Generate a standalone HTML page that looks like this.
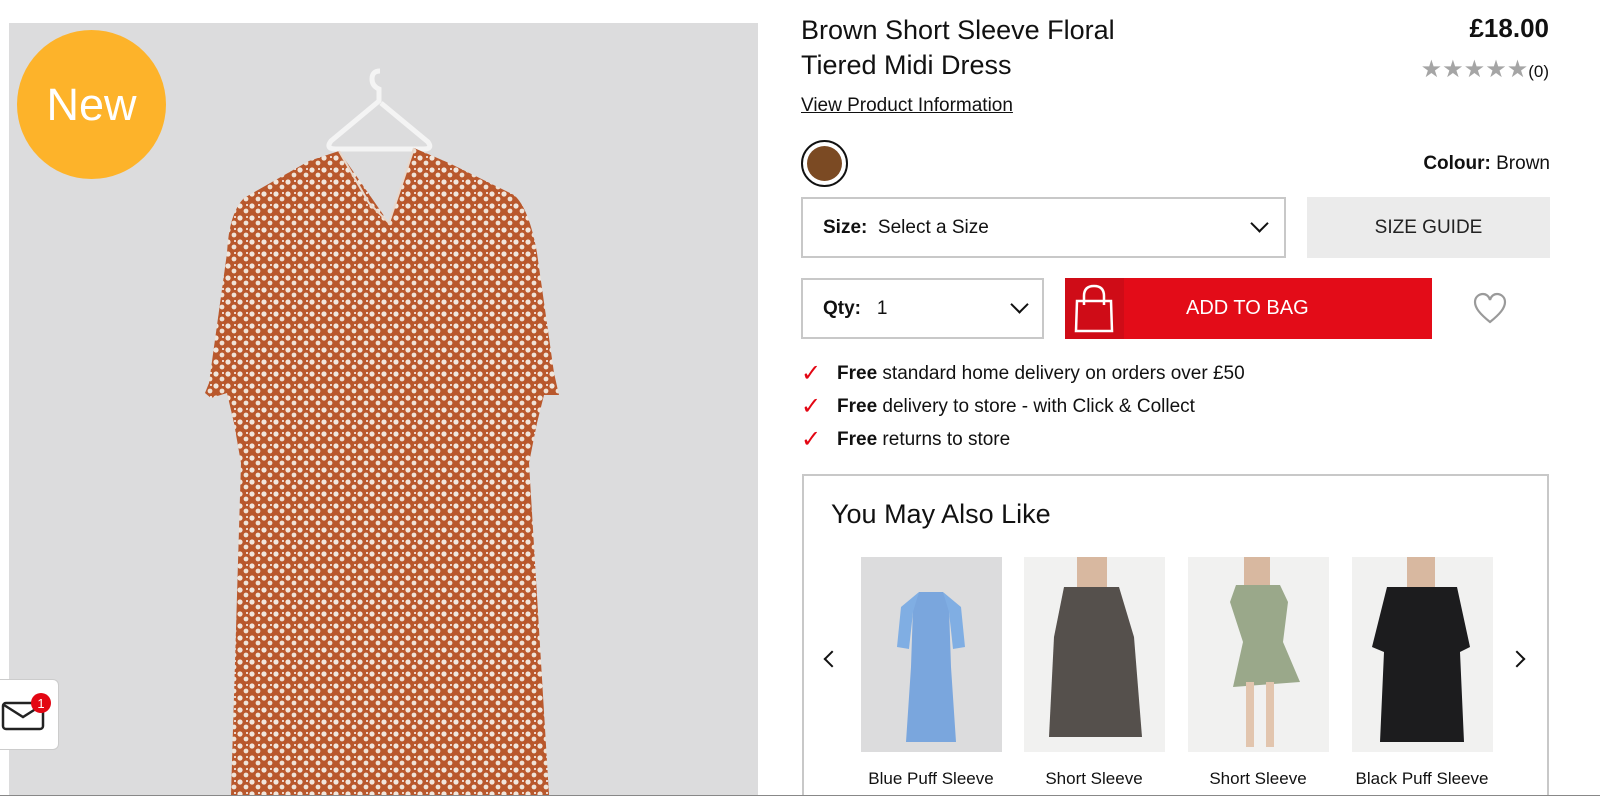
<!DOCTYPE html>
<html><head><meta charset="utf-8"><style>
*{margin:0;padding:0;box-sizing:border-box}
body{width:1600px;height:812px;overflow:hidden;background:#fff;font-family:"Liberation Sans",Arial,sans-serif;color:#111;position:relative}
.abs{position:absolute}
.img{left:9px;top:23px;width:749px;height:772px;background:#dcdcdd;overflow:hidden}
.new{left:17px;top:30px;width:149px;height:149px;border-radius:50%;background:#fdb32a;color:#fff;font-size:45px;text-align:center;line-height:149px}
.title{left:801px;top:13px;font-size:27px;line-height:35px}
.price{right:51px;top:13px;font-size:26px;font-weight:bold}
.stars{right:51px;top:55px;font-size:24px;color:#a5a5a5;letter-spacing:0}
.stars span{color:#111;font-size:17px;letter-spacing:0}
.vpi{left:801px;top:95px;font-size:19px;text-decoration:underline}
.sel{border:2px solid #c8c8c8;background:#fff;font-size:19px}
.chev{position:absolute;width:13px;height:13px;border-right:2.5px solid #111;border-bottom:2.5px solid #111;transform:rotate(45deg)}
.ticks div{height:33px;font-size:19px;position:relative;padding-left:36px}
.ticks div:before{content:"✓";position:absolute;left:0;top:-4px;color:#e30613;font-size:24px}
.box{left:802px;top:474px;width:747px;height:330px;border:2px solid #c8c8c8;border-bottom:none}
.th{position:absolute;top:557px;width:141px;height:195px}
.lab{position:absolute;top:769px;font-size:17px;width:170px;text-align:center}
</style></head><body>
<div class="abs img">
<svg width="749" height="772" viewBox="0 0 749 772">
<defs><pattern id="p" width="12" height="12" patternUnits="userSpaceOnUse"><rect width="12" height="12" fill="#b9582c"/><circle cx="3" cy="3" r="2.6" fill="#f1e6dc"/><circle cx="9" cy="8" r="2.4" fill="#efe2d6"/><circle cx="10" cy="2" r="1" fill="#fff"/></pattern></defs>
<path d="M371 48 q-8 0-8 8 q0 7 7 10 v12 L322 118 q-6 8 5 8 L415 126 q9 0 4-7 L372 80" fill="none" stroke="#f4f4f4" stroke-width="5"/>
<path d="M330 128 L300 138 L235 175 Q220 190 218 230 L200 360 L196 370 L202 375 L218 370 L225 400 L232 440 L222 772 L540 772 L520 440 L528 400 L535 372 L550 372 L545 350 L528 230 Q520 185 505 172 L440 140 L405 125 L380 200 Z" fill="url(#p)"/>
<path d="M330 128 L360 180 L380 200 L405 125" fill="none" stroke="#e8d8cc" stroke-width="2"/>
</svg></div>
<div class="abs new">New</div>
<div class="abs" style="left:0;top:679px;width:59px;height:71px;background:#fff;border:1px solid #ccc;border-left:none;border-radius:0 6px 6px 0">
<svg width="59" height="71"><rect x="3" y="23" width="40" height="26" rx="3" fill="none" stroke="#222" stroke-width="2.5"/><path d="M4 25 L23 37 L42 25" fill="none" stroke="#222" stroke-width="2.5"/><circle cx="41" cy="23" r="10" fill="#e30613"/><text x="41" y="28" font-size="13" fill="#fff" text-anchor="middle" font-family="Liberation Sans">1</text></svg></div>

<div class="abs title">Brown Short Sleeve Floral<br>Tiered Midi Dress</div>
<div class="abs price">£18.00</div>
<div class="abs stars">★★★★★<span>(0)</span></div>
<div class="abs vpi">View Product Information</div>
<div class="abs" style="left:801px;top:140px;width:47px;height:47px;border-radius:50%;border:2px solid #111;padding:4px"><div style="width:100%;height:100%;border-radius:50%;background:#7b4a23"></div></div>
<div class="abs" style="right:50px;top:153px;font-size:19px"><b>Colour:</b> Brown</div>
<div class="abs sel" style="left:801px;top:197px;width:485px;height:61px"><div class="abs" style="left:20px;top:18px"><b>Size:</b>&nbsp; Select a Size</div><div class="chev" style="right:18px;top:18px"></div></div>
<div class="abs" style="left:1307px;top:197px;width:243px;height:61px;background:#ebebeb;font-size:19px;text-align:center;line-height:61px;color:#222">SIZE GUIDE</div>
<div class="abs sel" style="left:801px;top:278px;width:243px;height:61px"><div class="abs" style="left:20px;top:18px"><b>Qty:</b>&nbsp;&nbsp; 1</div><div class="chev" style="right:16px;top:18px"></div></div>
<div class="abs" style="left:1065px;top:278px;width:367px;height:61px;background:#e30c18;color:#fff;font-size:20px;line-height:61px">
<div class="abs" style="left:0;top:0;width:59px;height:61px;background:#cf0c17"><svg width="59" height="61"><path d="M12 23 H46 L47 53 H11 Z" fill="none" stroke="#fff" stroke-width="2.5"/><path d="M19 27 V18 Q19 8 29 8 Q39 8 39 18 V27" fill="none" stroke="#fff" stroke-width="2.5"/></svg></div>
<div class="abs" style="left:121px;top:0">ADD TO BAG</div></div>
<svg class="abs" style="left:1472px;top:292px" width="36" height="34"><path d="M18 30 C8 22 3 16 3 10 C3 5 7 2 11 2 C14 2 17 4 18 8 C19 4 22 2 25 2 C29 2 33 5 33 10 C33 16 28 22 18 30 Z" fill="none" stroke="#9a9a9a" stroke-width="2.2"/></svg>
<div class="abs ticks" style="left:801px;top:363px">
<div><b>Free</b> standard home delivery on orders over £50</div>
<div><b>Free</b> delivery to store - with Click &amp; Collect</div>
<div><b>Free</b> returns to store</div></div>

<div class="abs box"></div>
<div class="abs" style="left:831px;top:499px;font-size:27px">You May Also Like</div>
<div class="abs chev" style="left:826px;top:653px;transform:rotate(135deg);width:12px;height:12px;border-width:2px"></div>
<div class="abs chev" style="left:1511px;top:653px;transform:rotate(-45deg);width:12px;height:12px;border-width:2px"></div>
<div class="th" style="left:861px;background:#dcdcdd"><svg width="141" height="195"><path d="M58 35 L82 35 L88 50 L90 110 L95 185 L45 185 L50 110 L52 50 Z" fill="#7aa6dd"/><path d="M58 35 L40 50 L36 90 L48 92 L52 55Z M82 35 L100 50 L104 90 L92 92 L88 55Z" fill="#80aee3"/></svg></div>
<div class="th" style="left:1024px;background:#f1f1f0"><svg width="141" height="195"><rect x="53" y="0" width="30" height="30" fill="#d8b8a0"/><path d="M40 30 L95 30 L110 80 L118 180 L25 180 L30 80 Z" fill="#55504c"/></svg></div>
<div class="th" style="left:1188px;background:#f1f1f0"><svg width="141" height="195"><rect x="56" y="0" width="26" height="28" fill="#d8b8a0"/><path d="M48 28 L92 28 L100 45 L95 85 L112 125 L45 130 L55 85 L42 45 Z" fill="#9aa88a"/><rect x="58" y="125" width="8" height="65" fill="#e2c5ae"/><rect x="78" y="125" width="8" height="65" fill="#e2c5ae"/></svg></div>
<div class="th" style="left:1352px;background:#f1f1f0"><svg width="141" height="195"><rect x="55" y="0" width="28" height="30" fill="#d8b8a0"/><path d="M35 30 L105 30 L118 90 L108 95 L112 185 L28 185 L32 95 L20 90 Z" fill="#1c1c1e"/></svg></div>
<div class="lab" style="left:846px">Blue Puff Sleeve</div>
<div class="lab" style="left:1009px">Short Sleeve</div>
<div class="lab" style="left:1173px">Short Sleeve</div>
<div class="lab" style="left:1337px">Black Puff Sleeve</div>
<div class="abs" style="left:0;top:795px;width:1600px;height:17px;background:#fff;border-top:1px solid #888"></div>
</body></html>
